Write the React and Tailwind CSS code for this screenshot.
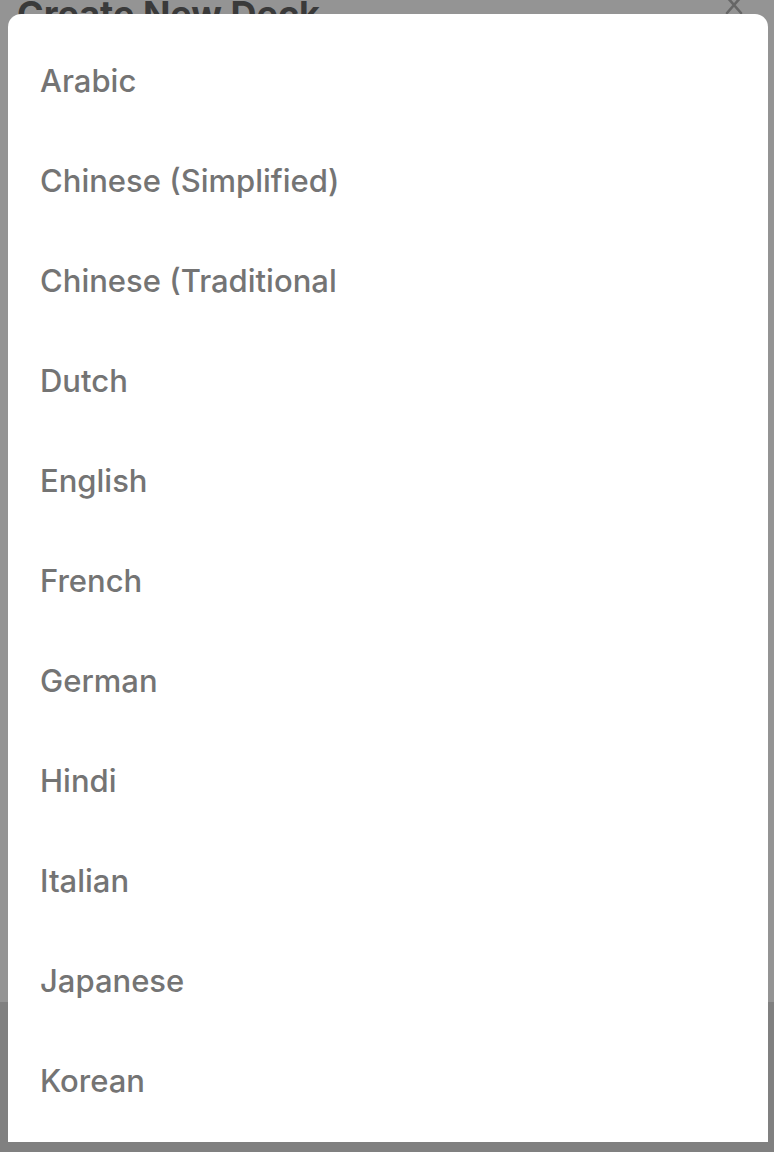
import React from "react";

const langs = [
  "Arabic",
  "Chinese (Simplified)",
  "Chinese (Traditional",
  "Dutch",
  "English",
  "French",
  "German",
  "Hindi",
  "Italian",
  "Japanese",
  "Korean",
];

export default function App() {
  return (
    <div
      className="relative w-[774px] h-[1152px] overflow-hidden bg-[#949494] flex flex-col"
      style={{ fontFamily: "Inter, 'Noto Sans', sans-serif" }}
    >
      <div className="flex items-start justify-between pl-[17px] pr-[31px] h-[1002px]">
        <div className="text-[36px] font-bold leading-none text-[#3a3a3a] -mt-[4px]">
          Create New Deck
        </div>
        <svg width="18" height="20" viewBox="0 0 18 20" className="-mt-[5px]">
          <path d="M2 2 L16 18 M16 2 L2 18" stroke="#666666" strokeWidth="2.6" strokeLinecap="round" />
        </svg>
      </div>
      <div className="flex-1 bg-[#808080]" />
      <div className="absolute left-[8px] top-[14px] w-[760px] h-[1128px] bg-white rounded-t-[13px] pt-[17px]">
        {langs.map((l) => (
          <div key={l} className="h-[100px] flex items-center pl-[32px] text-[31px] text-[#747474] font-medium">
            {l}
          </div>
        ))}
      </div>
    </div>
  );
}
